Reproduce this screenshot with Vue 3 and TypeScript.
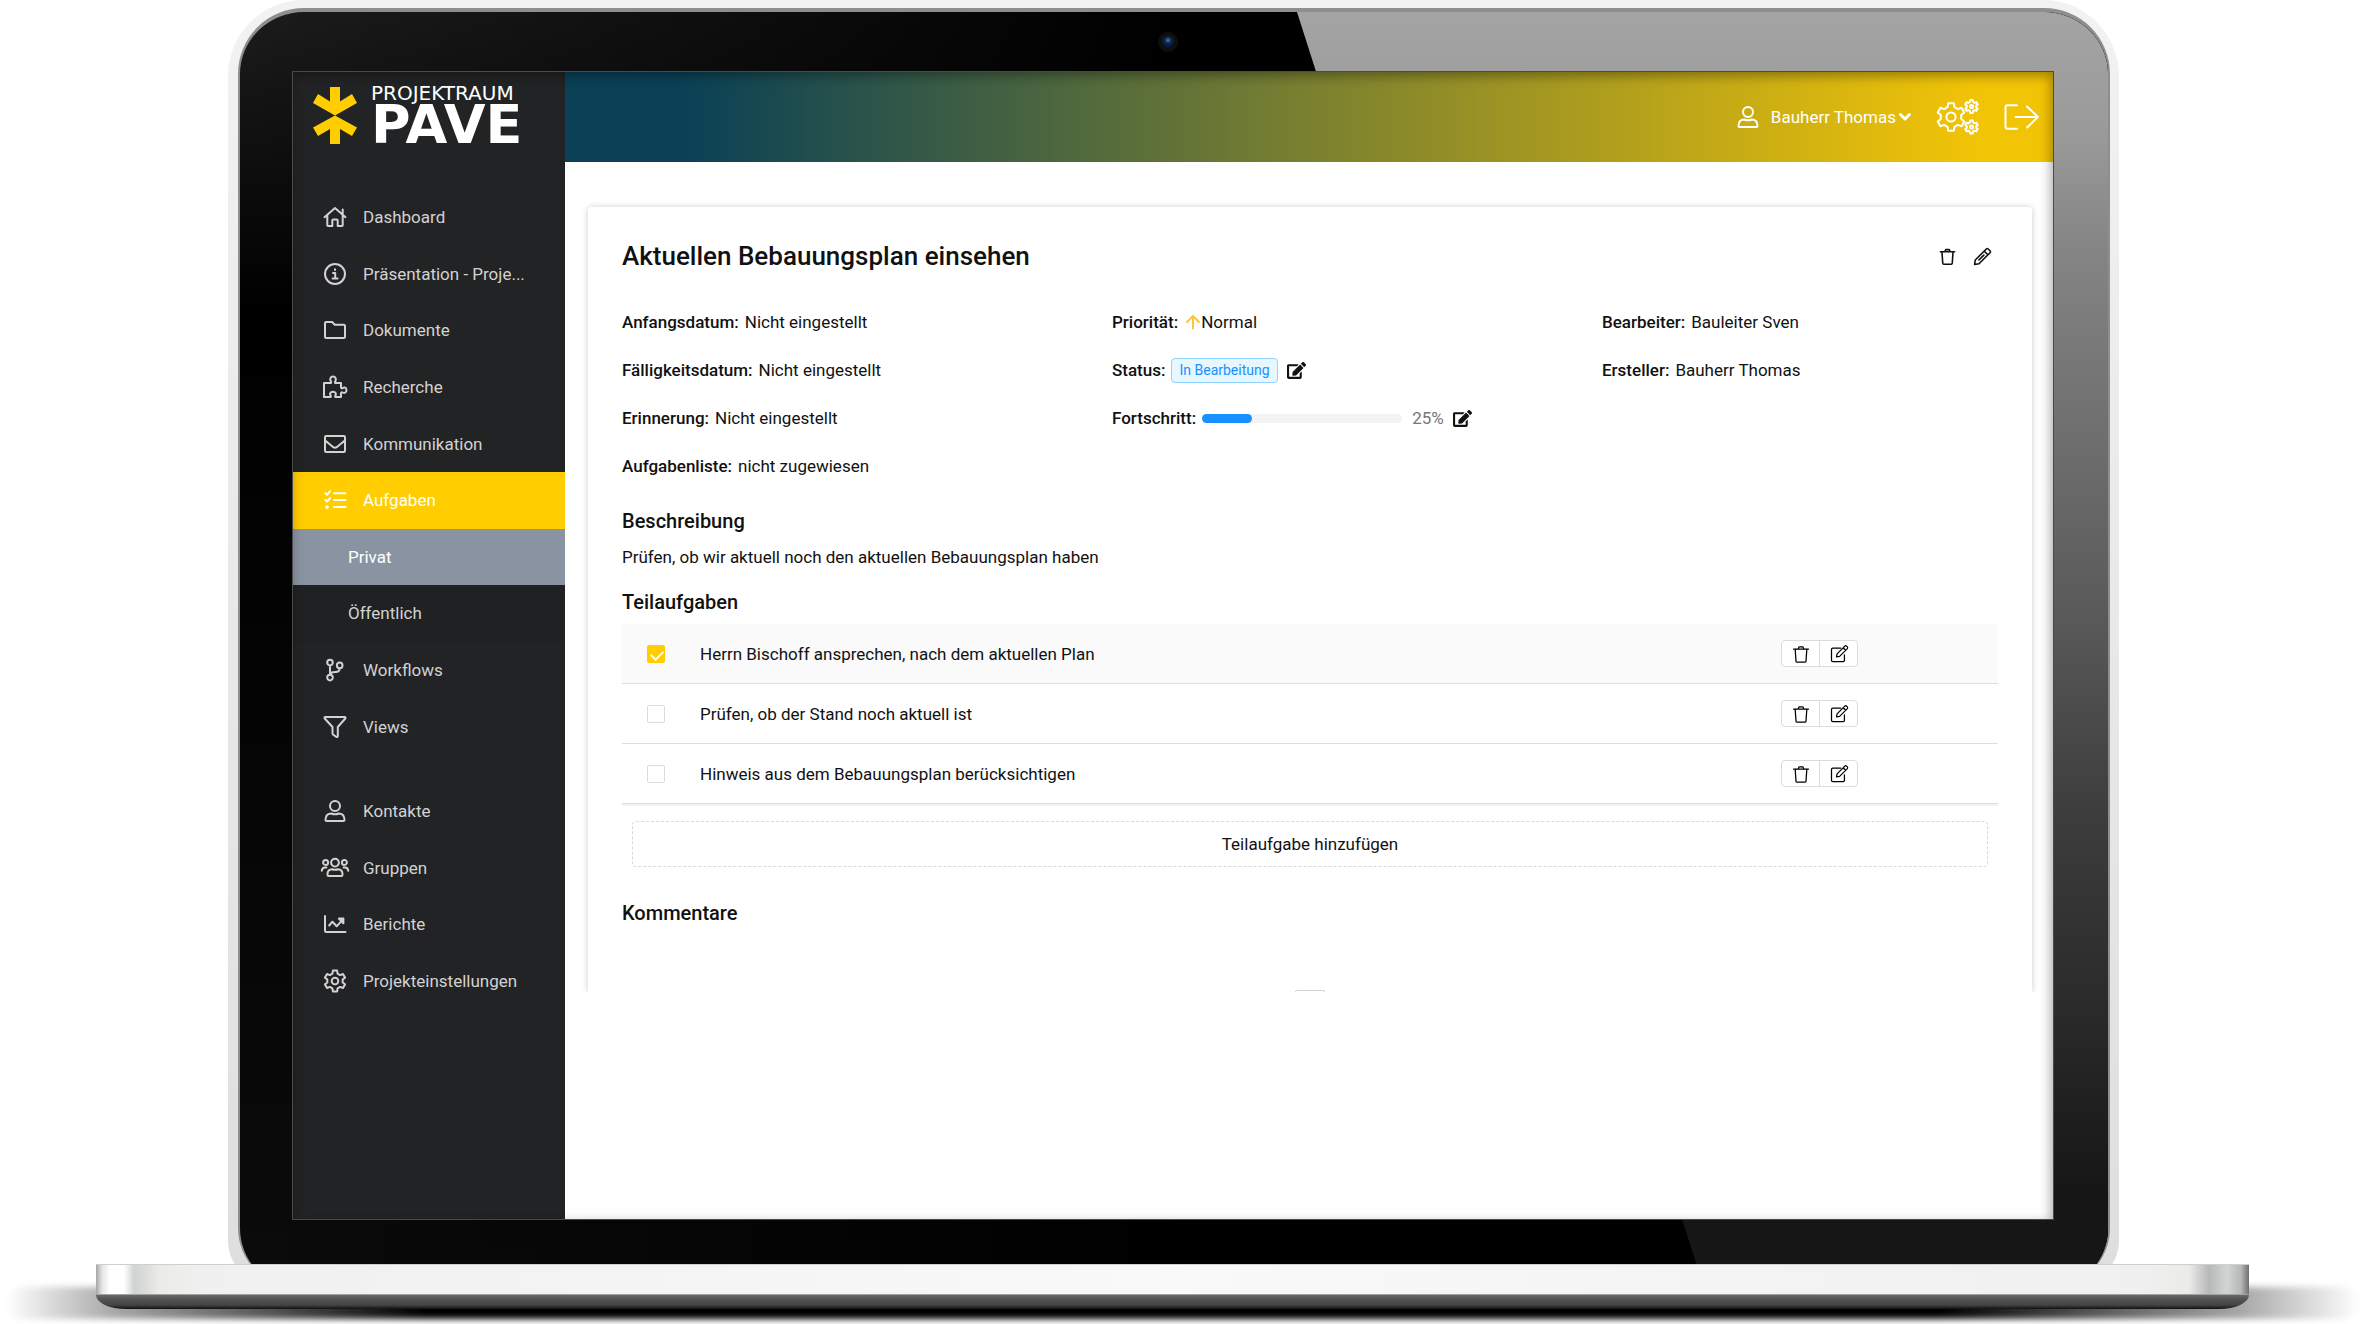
<script setup lang="ts">
import { ref } from 'vue'

interface NavItem {
  label: string
  icon: string
}

interface NavGroup {
  name: string
  items: NavItem[]
}

interface SubTask {
  id: number
  title: string
  done: boolean
}

// Outline of a toothed wheel around (cx, cy), used by the settings icons.
function gear(cx: number, cy: number, outer: number, inner: number, teeth: number): string {
  const step = (Math.PI * 2) / teeth
  const points: string[] = []
  for (let i = 0; i < teeth; i++) {
    const mid = i * step - Math.PI / 2
    const corners: [number, number][] = [
      [inner, mid - step * 0.32],
      [outer, mid - step * 0.19],
      [outer, mid + step * 0.19],
      [inner, mid + step * 0.32],
    ]
    for (const [radius, angle] of corners) {
      points.push(`${(cx + radius * Math.cos(angle)).toFixed(2)} ${(cy + radius * Math.sin(angle)).toFixed(2)}`)
    }
  }
  return `M${points.join('L')}Z`
}

function ring(cx: number, cy: number, r: number): string {
  return `M${cx - r} ${cy}a${r} ${r} 0 1 0 ${2 * r} 0a${r} ${r} 0 1 0 ${-2 * r} 0Z`
}

const icons: Record<string, string> = {
  home: 'M1.5 12.2L12 3l10.500 9.200M4.300 10v10.200q0 .8.8.8h4.200v-5.500q0-1 1-1h3.400q1 0 1 1v5.500h4.200q.8 0 .8-.8V10M19.700 9.500V4.500',
  info: `${ring(12, 12, 10)}M12 7.300v.6M10 11h2.200v5.600M9.600 16.600h5`,
  folder: 'M3.200 4h6l2.600 2.700h9q1.200 0 1.200 1.200v10.900q0 1.200-1.200 1.200H3.200q-1.200 0-1.200-1.200V5.200Q2 4 3.200 4Z',
  puzzle:
    'M1 8h6.500c1 0 .6-1.200.2-1.900C6.600 4.300 7.400 1.500 10 1.500s3.500 2.800 2.400 4.600c-.4.700-.8 1.900.2 1.900H18v4.200c0 1.100 1 1.400 1.800.8 1.600-1.200 3.700-.3 3.700 2.200s-2.200 3.300-3.700 2.300c-.9-.6-1.800-.2-1.800.8V22h-5.200c-1 0-.7-1-.3-1.600.9-1.500.2-3.700-2.500-3.700s-3.500 2.200-2.500 3.700c.4.600.7 1.600-.3 1.600H1Z',
  mail: 'M3.200 4h17.600Q22 4 22 5.200v13.600q0 1.200-1.200 1.200H3.200Q2 20 2 18.800V5.200Q2 4 3.200 4ZM2.200 8.500l7.800 6.400q2 1.500 4 0l7.800-6.400',
  tasks: 'M2.400 5.200l1.700 1.600 3-3.600M2.400 12l1.700 1.600 3-3.600M11 5.200h11.500M11 12h11.500M11 19h11.500M4 18.200a.8.8 0 1 0 .1 0Z',
  branch: `${ring(7, 4.6, 2.8)}${ring(7, 19.600, 2.8)}${ring(16.700, 7.4, 2.8)}M7 7.400v9.400M16.700 10.200q0 3.600-4 3.800l-2.500.2q-3 .3-3.200 2.600`,
  filter: 'M2.200 2h19.600q1.200.4.500 1.500L14.800 12v9.200q-.5 1.300-1.700.6l-3-2.200q-.6-.5-.6-1.200V12L1.700 3.500Q1 2.400 2.200 2Z',
  user: `${ring(12, 7, 5)}M8.300 14.500q3.700 1.700 7.400 0 5.500.1 5.800 6v.4q0 1.100-1.100 1.100H3.600q-1.100 0-1.100-1.100v-.4q.3-5.900 5.800-6Z`,
  group: `${ring(12, 6.6, 3.900)}${ring(2.6, 6.4, 2.5)}${ring(21.400, 6.4, 2.5)}M9 13.300q3 1.100 6 0 4.300.2 4.500 4.600v.9q0 1.200-1.200 1.200H5.700q-1.200 0-1.200-1.200v-.9q.2-4.400 4.500-4.600ZM-1.200 14.800q.2-3 3-3.200h1.600M25.200 14.800q-.2-3-3-3.200h-1.600`,
  chart: 'M2 4v14.800Q2 20 3.200 20H22.500M6.200 13.500l3.200-3.800 4.300 4.600 6-6.600M15.800 6.600h4.600v4.600Z',
  cog: `${gear(12, 12, 10.6, 7.8, 6)}${ring(12, 12, 3.300)}`,
  trash: 'M3 6h18M8.500 6l1.300-2.700h4.400L15.500 6M5 6l1 14.500q.1 1.300 1.400 1.300h9.200q1.300 0 1.400-1.300L19 6',
  pencil: 'M2 22l.9-5.600L16.800 2.500q1.200-1.100 2.400 0l2.300 2.300q1.100 1.200 0 2.400L7.600 21.100 2 22ZM14.200 5.200l4.600 4.600M7.500 16.500l6.200-6.200',
  compose: 'M14 5H4.500Q3 5 3 6.500v13Q3 21 4.500 21h12.500q1.500 0 1.500-1.500V13M9 15.500l.7-3.700L19 2.500q1-.8 2 0l1 1q.8 1 0 2l-9.300 9.300L9 15.500ZM17 4.500l3 3',
}

const editPath =
  'M402.600 83.200l90.200 90.200c3.800 3.800 3.800 10 0 13.800L274.400 405.600l-92.800 10.300c-12.400 1.400-22.900-9.100-21.500-21.500l10.300-92.800L388.800 83.200c3.800-3.800 10-3.800 13.800 0zm162-22.900l-48.800-48.800c-15.200-15.200-39.900-15.200-55.200 0l-35.400 35.400c-3.800 3.800-3.800 10 0 13.800l90.200 90.200c3.800 3.800 10 3.800 13.800 0l35.400-35.400c15.200-15.300 15.200-40 0-55.200zM384 346.200V448H64V128h229.800c3.200 0 6.200-1.300 8.500-3.500l40-40c7.600-7.600 2.200-20.500-8.500-20.500H48C21.500 64 0 85.500 0 112v352c0 26.500 21.500 48 48 48h352c26.500 0 48-21.500 48-48V306.200c0-10.700-12.900-16-20.500-8.500l-40 40c-2.200 2.300-3.500 5.300-3.500 8.500z'

const cogsPath = [
  gear(15, 18, 14, 10.4, 6),
  ring(15, 18, 4.600),
  gear(35.500, 7.5, 6.6, 4.800, 6),
  ring(35.500, 7.5, 1.600),
  gear(35.500, 28, 6.6, 4.800, 6),
  ring(35.500, 28, 1.600),
].join('')

const navGroups: NavGroup[] = [
  {
    name: 'main',
    items: [
      { label: 'Dashboard', icon: 'home' },
      { label: 'Präsentation - Proje...', icon: 'info' },
      { label: 'Dokumente', icon: 'folder' },
      { label: 'Recherche', icon: 'puzzle' },
      { label: 'Kommunikation', icon: 'mail' },
      { label: 'Aufgaben', icon: 'tasks' },
      { label: 'Privat', icon: '' },
      { label: 'Öffentlich', icon: '' },
      { label: 'Workflows', icon: 'branch' },
      { label: 'Views', icon: 'filter' },
    ],
  },
  {
    name: 'admin',
    items: [
      { label: 'Kontakte', icon: 'user' },
      { label: 'Gruppen', icon: 'group' },
      { label: 'Berichte', icon: 'chart' },
      { label: 'Projekteinstellungen', icon: 'cog' },
    ],
  },
]

const activeItem = ref('Aufgaben')
const activeSubItem = ref('Privat')
const progress = ref(25)

const subTasks = ref<SubTask[]>([
  { id: 1, title: 'Herrn Bischoff ansprechen, nach dem aktuellen Plan', done: true },
  { id: 2, title: 'Prüfen, ob der Stand noch aktuell ist', done: false },
  { id: 3, title: 'Hinweis aus dem Bebauungsplan berücksichtigen', done: false },
])
</script>

<template>
  <div class="stage">
    <div class="lid">
      <div class="bezel">
        <div class="glare"></div>
        <div class="camera-bar"><span class="camera"></span></div>

        <div class="screen">
          <aside class="sidebar">
            <a class="logo" href="#">
              <svg class="logo-mark" viewBox="0 0 44 57" aria-hidden="true">
                <path d="M17 0h10v14.500l12-7.500 5 9-22 12.500L0 16l5-9 12 7.500ZM17 57h10V42l12 7 5-8.500L22 28.500 0 40.500 5 49l12-7Z" />
              </svg>
              <span class="logo-text">
                <span class="logo-top">PROJEKTRAUM</span>
                <span class="logo-name">PAVE</span>
              </span>
            </a>

            <nav class="nav">
              <ul v-for="group in navGroups" :key="group.name" class="nav-group" :class="group.name">
                <li
                  v-for="item in group.items"
                  :key="item.label"
                  class="nav-row"
                  :class="{ active: item.label === activeItem, 'active-sub': item.label === activeSubItem, sub: !item.icon }"
                >
                  <a class="nav-link" href="#">
                    <svg v-if="item.icon" class="nav-icon" viewBox="0 0 24 24" aria-hidden="true">
                      <path :d="icons[item.icon]" />
                    </svg>
                    <span>{{ item.label }}</span>
                  </a>
                </li>
              </ul>
            </nav>
          </aside>

          <div class="page">
            <header class="topbar">
              <button class="user-menu" type="button">
                <svg class="user-icon" viewBox="0 0 24 24" aria-hidden="true"><path :d="icons.user" /></svg>
                <span>Bauherr Thomas</span>
                <svg class="chevron" viewBox="0 0 12 8" aria-hidden="true"><path d="M1.500 1.500L6 6l4.500-4.500" /></svg>
              </button>
              <button class="bar-button" type="button" aria-label="Einstellungen">
                <svg class="cogs" viewBox="0 0 43 36" aria-hidden="true"><path :d="cogsPath" /></svg>
              </button>
              <button class="bar-button" type="button" aria-label="Abmelden">
                <svg class="logout" viewBox="0 0 36 26" aria-hidden="true">
                  <path d="M13 1.200H3.500q-2 0-2 2v19.600q0 2 2 2H13M11.500 13H34M23 2.500L34 13 23 23.500" />
                </svg>
              </button>
            </header>

            <main class="content">
              <article class="card">
                <div class="card-head">
                  <h1>Aktuellen Bebauungsplan einsehen</h1>
                  <div class="card-tools">
                    <button type="button" aria-label="Löschen">
                      <svg viewBox="0 0 24 24" aria-hidden="true"><path :d="icons.trash" /></svg>
                    </button>
                    <button type="button" aria-label="Bearbeiten">
                      <svg viewBox="0 0 24 24" aria-hidden="true"><path :d="icons.pencil" /></svg>
                    </button>
                  </div>
                </div>

                <div class="facts">
                  <dl>
                    <div class="fact"><dt>Anfangsdatum:</dt><dd>Nicht eingestellt</dd></div>
                    <div class="fact"><dt>Fälligkeitsdatum:</dt><dd>Nicht eingestellt</dd></div>
                    <div class="fact"><dt>Erinnerung:</dt><dd>Nicht eingestellt</dd></div>
                    <div class="fact"><dt>Aufgabenliste:</dt><dd>nicht zugewiesen</dd></div>
                  </dl>
                  <dl>
                    <div class="fact">
                      <dt>Priorität:</dt>
                      <dd>
                        <svg class="arrow-up" viewBox="0 0 14 14" aria-hidden="true"><path d="M7 13.500V1M1 7l6-6 6 6" /></svg>
                        Normal
                      </dd>
                    </div>
                    <div class="fact">
                      <dt>Status:</dt>
                      <dd>
                        <span class="tag">In Bearbeitung</span>
                        <button class="edit" type="button" aria-label="Status ändern">
                          <svg viewBox="0 0 576 512" aria-hidden="true"><path :d="editPath" /></svg>
                        </button>
                      </dd>
                    </div>
                    <div class="fact">
                      <dt>Fortschritt:</dt>
                      <dd>
                        <span class="track" role="progressbar" :aria-valuenow="progress" aria-valuemin="0" aria-valuemax="100">
                          <span class="fill" :style="{ width: progress + '%' }"></span>
                        </span>
                        <span class="percent">{{ progress }}%</span>
                        <button class="edit" type="button" aria-label="Fortschritt ändern">
                          <svg viewBox="0 0 576 512" aria-hidden="true"><path :d="editPath" /></svg>
                        </button>
                      </dd>
                    </div>
                  </dl>
                  <dl>
                    <div class="fact"><dt>Bearbeiter:</dt><dd>Bauleiter Sven</dd></div>
                    <div class="fact"><dt>Ersteller:</dt><dd>Bauherr Thomas</dd></div>
                  </dl>
                </div>

                <h2>Beschreibung</h2>
                <p class="description">Prüfen, ob wir aktuell noch den aktuellen Bebauungsplan haben</p>

                <h2>Teilaufgaben</h2>
                <table class="tasks">
                  <tbody>
                    <tr v-for="task in subTasks" :key="task.id" :class="{ done: task.done }">
                      <td class="cell-check">
                        <input :id="'task-' + task.id" v-model="task.done" type="checkbox" />
                      </td>
                      <td><label :for="'task-' + task.id">{{ task.title }}</label></td>
                      <td class="cell-actions">
                        <div class="button-pair">
                          <button type="button" aria-label="Teilaufgabe löschen">
                            <svg viewBox="0 0 24 24" aria-hidden="true"><path :d="icons.trash" /></svg>
                          </button>
                          <button type="button" aria-label="Teilaufgabe bearbeiten">
                            <svg viewBox="0 0 24 24" aria-hidden="true"><path :d="icons.compose" /></svg>
                          </button>
                        </div>
                      </td>
                    </tr>
                  </tbody>
                </table>

                <button class="add" type="button">Teilaufgabe hinzufügen</button>

                <h2>Kommentare</h2>
                <div class="comments"><span class="comments-handle"></span></div>
              </article>
            </main>
          </div>
        </div>
      </div>
    </div>

    <div class="base">
      <div class="base-top"></div>
      <div class="base-bottom"></div>
    </div>
  </div>
</template>

<style>
body {
  margin: 0;
  background: #fff;
}
</style>

<style scoped>
* {
  box-sizing: border-box;
}

.stage {
  min-height: 100vh;
  overflow: hidden;
  padding-bottom: 15px;
  font-family: Roboto, 'Open Sans', sans-serif;
  font-size: 17px;
  line-height: 24px;
  color: #111;
}

button {
  padding: 0;
  border: 0;
  background: none;
  color: inherit;
  font: inherit;
  cursor: pointer;
}

a {
  color: inherit;
  text-decoration: none;
}

svg {
  display: block;
  overflow: visible;
  flex: none;
  fill: none;
  stroke: currentColor;
  stroke-width: 2;
  stroke-linecap: round;
  stroke-linejoin: round;
}

/* Laptop lid */
.lid {
  margin: 0 249px -24px 228px;
  padding: 8px 9px 0 10px;
  border-radius: 76px 76px 48px 48px;
  background: linear-gradient(180deg, #f2f2f2, #ececec 30%, #dedede);
}

.bezel {
  position: relative;
  overflow: hidden;
  padding: 0 55px 69px 53px;
  border: 2px solid #8e8e8e;
  border-top-width: 4px;
  border-bottom: 0;
  border-radius: 66px 66px 60px 60px;
  background: linear-gradient(180deg, #1c1c1c 0, #000 300px, #0b0b0b);
}

.bezel::before {
  content: '';
  position: absolute;
  inset: 0;
  background: linear-gradient(90deg, transparent, #000 50%);
}

.glare {
  position: absolute;
  inset: 0;
  clip-path: polygon(1057px 0, 100% 0, 100% 100%, 1464px 100%);
  background: linear-gradient(180deg, #a4a4a4 0, #9a9a9a 120px, #868686 230px, #7d7d7d 300px, #5a5a5a 600px, #3d3d3d 800px, #2a2a2a 1000px, #161616 1180px);
}

.camera-bar {
  position: relative;
  display: flex;
  justify-content: center;
  align-items: center;
  height: 60px;
  padding-right: 10px;
}

.camera {
  width: 20px;
  height: 20px;
  border: 4px solid #0e0e0e;
  border-radius: 50%;
  background: radial-gradient(circle at 50% 35%, #4d7fae 0, #10264a 3px, #071530 7px);
}

/* Screen */
.screen {
  position: relative;
  display: flex;
  min-height: calc(100vh - 177px);
  background: #fff;
}

.screen::after {
  content: '';
  position: absolute;
  inset: 0;
  box-shadow: inset -2px 4px 12px rgba(0, 0, 0, 0.35), 0 0 0 1px #4a4a4a;
  pointer-events: none;
}

.sidebar {
  flex: none;
  width: 272px;
  background: #222325;
  color: #d2d2d2;
}

.logo {
  display: flex;
  gap: 14px;
  height: 117px;
  padding: 15px 0 0 20px;
  color: #fff;
}

.logo-mark {
  width: 44px;
  height: 57px;
  fill: #ffcd00;
  stroke: none;
}

.logo-text {
  display: flex;
  flex-direction: column;
  font-family: 'DejaVu Sans', sans-serif;
}

.logo-top {
  font-size: 20px;
  line-height: 12px;
}

.logo-name {
  font-size: 54px;
  line-height: 52px;
  font-weight: 700;
}

.nav {
  display: flex;
  flex-direction: column;
  gap: 28px;
}

.nav-group {
  display: grid;
  grid-auto-rows: 1fr;
  margin: 0;
  padding: 0;
  list-style: none;
}

.nav-group.main {
  min-height: 566px;
}

.nav-group.admin {
  min-height: 226px;
}

.nav-link {
  display: flex;
  align-items: center;
  gap: 16px;
  height: 100%;
  padding-left: 30px;
}

.nav-icon {
  width: 24px;
  height: 24px;
}

.sub .nav-link {
  padding-left: 55px;
}

.sub {
  background: #202123;
}

.active {
  background: #ffcd00;
  color: #fff;
}

.active-sub {
  background: #8993a1;
  color: #fff;
}

.page {
  display: flex;
  flex: 1;
  flex-direction: column;
  min-width: 0;
}

.topbar {
  display: flex;
  align-items: center;
  justify-content: flex-end;
  gap: 25px;
  height: 90px;
  padding-right: 13px;
  background: linear-gradient(90deg, #0a4156 8%, #f2c406 95%);
  color: #fff;
}

.user-menu {
  display: flex;
  align-items: center;
  gap: 3px;
}

.user-icon {
  width: 24px;
  height: 24px;
  margin-right: 8px;
}

.chevron {
  width: 12px;
  height: 8px;
  stroke-width: 3;
}

.cogs {
  width: 43px;
  height: 36px;
}

.logout {
  width: 36px;
  height: 26px;
}

.content {
  overflow: hidden;
  padding: 45px 21px 0 23px;
}

/* Task card */
.card {
  padding: 34px 34px 0;
  border-radius: 4px 4px 0 0;
  box-shadow: 0 0 6px rgba(0, 0, 0, 0.2);
  background: #fff;
}

.card-head {
  display: flex;
  align-items: center;
  justify-content: space-between;
  height: 30px;
}

h1,
h2 {
  margin: 0;
  font-weight: 500;
}

h1 {
  font-size: 26px;
  line-height: 30px;
}

h2 {
  font-size: 20px;
  line-height: 24px;
}

.card-tools {
  display: flex;
  gap: 16px;
  padding-right: 6px;
}

.card-tools svg {
  width: 19px;
  height: 19px;
}

.facts {
  display: grid;
  grid-template-columns: repeat(3, 1fr);
  gap: 94px;
  padding: 27px 0 19px;
}

.facts dl {
  margin: 0;
}

.fact {
  display: flex;
  align-items: center;
  gap: 6px;
  height: 48px;
}

.fact dt {
  font-weight: 500;
}

.fact dd {
  display: flex;
  align-items: center;
  margin: 0;
}

.arrow-up {
  width: 14px;
  height: 14px;
  margin: 0 1px 0 2px;
  stroke: #fcc53a;
}

.tag {
  height: 25px;
  padding: 0 7px;
  border: 1px solid #91d5ff;
  border-radius: 4px;
  background: #e6f7ff;
  color: #1890ff;
  font-size: 14px;
  line-height: 23px;
}

.edit {
  margin-left: 9px;
}

.edit svg {
  width: 19px;
  height: 17px;
  fill: currentColor;
  stroke: none;
}

.track {
  width: 200px;
  height: 9px;
  border-radius: 5px;
  background: #f3f3f3;
}

.fill {
  display: block;
  height: 100%;
  border-radius: 5px;
  background: #1890ff;
}

.percent {
  margin-left: 10px;
  color: #777;
}

.description {
  margin: 12px 0 21px;
}

.tasks {
  width: 100%;
  margin-top: 10px;
  border-spacing: 0;
  border-bottom: 2px solid #f3f3f3;
}

.tasks td {
  height: 60px;
  padding: 0;
  border-bottom: 1px solid #dedede;
}

.tasks .done td {
  background: #fafafa;
}

.tasks .cell-check {
  width: 78px;
  padding-left: 25px;
}

.tasks .cell-actions {
  width: 226px;
  padding-left: 9px;
}

.tasks input {
  display: block;
  appearance: none;
  width: 18px;
  height: 18px;
  margin: 0;
  border: 1px solid #dcdcdc;
  border-radius: 2px;
  background: #fff;
}

.tasks input:checked {
  border-color: #ffcd00;
  background: #ffcd00;
}

.tasks input:checked::before {
  content: '';
  display: block;
  width: 10px;
  height: 6px;
  margin: 4px 0 0 3px;
  border: solid #fff;
  border-width: 0 0 2px 2px;
  transform: rotate(-45deg);
}

.button-pair {
  display: inline-flex;
  vertical-align: middle;
  border: 1px solid #dcdcdc;
  border-radius: 4px;
  background: #fff;
}

.button-pair button {
  display: flex;
  align-items: center;
  justify-content: center;
  width: 37px;
  height: 25px;
}

.button-pair button + button {
  width: 38px;
  border-left: 1px solid #dcdcdc;
}

.button-pair svg {
  width: 20px;
  height: 20px;
  stroke: #000;
  stroke-width: 1.5;
}

.add {
  display: block;
  width: calc(100% - 20px);
  height: 46px;
  margin: 15px 10px 34px;
  border: 1px dashed #d9d9d9;
  border-radius: 4px;
}

.comments {
  display: flex;
  justify-content: center;
  align-items: flex-end;
  height: 67px;
}

.comments-handle {
  width: 30px;
  height: 2px;
  border: 1px solid #d4d4d4;
  border-bottom: 0;
  border-radius: 3px 3px 0 0;
}

/* Laptop base */
.base {
  position: relative;
  margin: 0 119px 0 96px;
}

.base::before {
  content: '';
  position: absolute;
  right: -110px;
  bottom: -10px;
  left: -90px;
  height: 32px;
  border-radius: 50px;
  background: linear-gradient(90deg, transparent, rgba(0, 0, 0, 0.35) 110px, #000 420px, #000 calc(100% - 420px), rgba(0, 0, 0, 0.35) calc(100% - 120px), transparent);
  filter: blur(3px);
}

.base-top {
  position: relative;
  height: 31px;
  border-top: 1px solid #cfcfcf;
  border-bottom: 1px solid #a0a0a0;
  background: linear-gradient(90deg, #a4a4a4 0, #e4e4e4 6px, #fff 14px, #fff 28px, #d0d3d1 38px, #d8dad8 46px, #ebebe9 64px, #f0f0f0 110px, #f9f9f9 50%, #f0f0f0 calc(100% - 110px), #ebebe9 calc(100% - 60px), #b6b9b7 calc(100% - 40px), #d3d5d4 calc(100% - 22px), #b4b8b7 calc(100% - 8px), #6f6f6f 100%);
}

.base-bottom {
  position: relative;
  height: 14px;
  border-radius: 0 0 30px 30px / 0 0 14px 14px;
  background: linear-gradient(180deg, #6a6a6a, #545454 4px, #444 10px, #111);
}
</style>
